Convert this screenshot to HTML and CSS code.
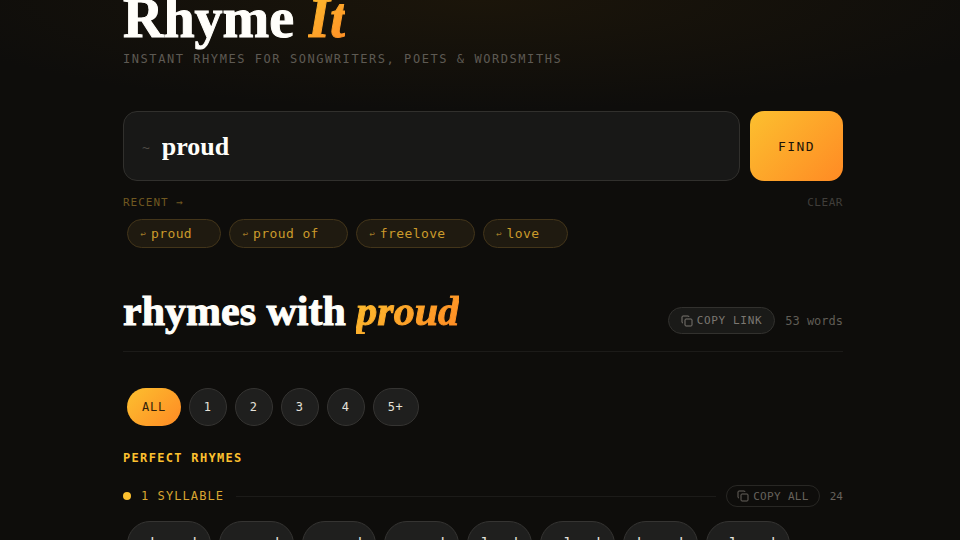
FILE: index.html
```html
<!DOCTYPE html>
<html lang="en">
<head>
<meta charset="utf-8">
<title>Rhyme It</title>
<link rel="stylesheet" href="styles.css">
</head>
<body>
<main class="page">
  <header class="masthead">
    <h1 class="brand">Rhyme <em class="accent">It</em></h1>
    <p class="tagline">Instant rhymes for songwriters, poets &amp; wordsmiths</p>
  </header>

  <form class="search">
    <label class="search-box">
      <span class="search-mark">~</span>
      <input class="search-input" type="text" value="proud" aria-label="Word to rhyme">
    </label>
    <button class="find" type="button">Find</button>
  </form>

  <section class="recent">
    <div class="recent-head">
      <span class="recent-title">Recent →</span>
      <button class="clear" type="button">Clear</button>
    </div>
    <div class="chips">
      <button class="recent-chip" type="button"><span class="back">↩</span>proud</button>
      <button class="recent-chip" type="button"><span class="back">↩</span>proud of</button>
      <button class="recent-chip" type="button"><span class="back">↩</span>freelove</button>
      <button class="recent-chip" type="button"><span class="back">↩</span>love</button>
    </div>
  </section>

  <section class="results">
    <div class="results-head">
      <h2 class="results-title">rhymes with <em class="accent">proud</em></h2>
      <div class="results-meta">
        <button class="copy copy-link" type="button">
          <svg class="copy-icon" viewBox="0 0 24 24"><rect x="8" y="8" width="14" height="14" rx="2"/><path d="M4 16a2 2 0 0 1-2-2V4a2 2 0 0 1 2-2h10a2 2 0 0 1 2 2"/></svg>
          Copy link
        </button>
        <span class="total">53 words</span>
      </div>
    </div>

    <div class="chips filters">
      <button class="filter active" type="button">ALL</button>
      <button class="filter" type="button">1</button>
      <button class="filter" type="button">2</button>
      <button class="filter" type="button">3</button>
      <button class="filter" type="button">4</button>
      <button class="filter" type="button">5+</button>
    </div>

    <h3 class="kind">Perfect rhymes</h3>
    <div class="group-head">
      <span class="dot"></span>
      <h4 class="group-title">1 syllable</h4>
      <span class="rule"></span>
      <button class="copy copy-all" type="button">
        <svg class="copy-icon" viewBox="0 0 24 24"><rect x="8" y="8" width="14" height="14" rx="2"/><path d="M4 16a2 2 0 0 1-2-2V4a2 2 0 0 1 2-2h10a2 2 0 0 1 2 2"/></svg>
        Copy all
      </button>
      <span class="count">24</span>
    </div>
    <div class="chips words">
      <button class="word" type="button">shroud</button>
      <button class="word" type="button">crowd</button>
      <button class="word" type="button">vowed</button>
      <button class="word" type="button">wowed</button>
      <button class="word" type="button">loud</button>
      <button class="word" type="button">cloud</button>
      <button class="word" type="button">bowed</button>
      <button class="word" type="button">plowed</button>
    </div>
  </section>
</main>
</body>
</html>
```
FILE: styles.css
```css
:root {
  --amber: #fcc02f;
  --orange: #ff8a24;
  --glow: linear-gradient(135deg, var(--amber), var(--orange));
  --serif: "Liberation Serif", serif;
  --mono: "DejaVu Sans Mono", monospace;
}

* { box-sizing: border-box; margin: 0; }

html { background: #0e0d0b; }

body {
  height: 100vh;
  overflow: hidden;
  padding-left: 6px;
  background: radial-gradient(ellipse 60% 110px at 50% 0, #1b150a, transparent);
  color: #fffefa;
  font-family: var(--mono);
}

button {
  border: 0;
  padding: 0;
  background: none;
  color: inherit;
  font-family: inherit;
}

.page {
  max-width: 720px;
  margin: -10px auto 0;
}

.accent {
  background: var(--glow);
  background-clip: text;
  -webkit-background-clip: text;
  color: transparent;
}

.brand {
  font: bold 56px/56px var(--serif);
  -webkit-text-stroke: 1px;
}

.tagline {
  margin-top: 5px;
  color: #5e5a53;
  font-size: 12px;
  line-height: 16px;
  letter-spacing: 0.13em;
  text-transform: uppercase;
}

.search {
  display: flex;
  gap: 10px;
  margin-top: 44px;
}

.search-box {
  display: flex;
  align-items: center;
  flex: 1;
  gap: 12px;
  height: 70px;
  padding: 2px 18px 0;
  border: 1px solid #31302d;
  border-radius: 14px;
  background: #181817;
}

.search-mark { color: #4e4b46; font-size: 13px; }

.search-input {
  flex: 1;
  min-width: 0;
  border: 0;
  padding: 0;
  outline: 0;
  background: none;
  color: #fffefa;
  font: bold 26px/32px var(--serif);
}

.find {
  padding: 0 28px;
  border-radius: 14px;
  background: var(--glow);
  color: #1c1408;
  font-size: 13px;
  letter-spacing: 0.11em;
  text-transform: uppercase;
}

.recent { margin-top: 13px; }

.recent-head {
  display: flex;
  justify-content: space-between;
  align-items: center;
  height: 16px;
  font-size: 11px;
  text-transform: uppercase;
}

.recent-title { color: #705820; letter-spacing: 1px; }

.clear { color: #403e3a; font-size: 11px; letter-spacing: 0.05em; text-transform: uppercase; }

.chips {
  display: flex;
  flex-wrap: wrap;
  gap: 8px;
  margin-left: 4px;
}

.recent .chips { margin-top: 9px; }

.recent-chip {
  display: flex;
  align-items: center;
  gap: 4px;
  height: 29px;
  padding: 0 28px 0 12px;
  border: 1px solid #43351a;
  border-radius: 15px;
  background: #1f1a10;
  color: #cb9a2b;
  font-size: 13px;
  letter-spacing: 0.03em;
}

.back { width: 7px; color: #a27c28; font-size: 9px; }

.results-head {
  display: flex;
  justify-content: space-between;
  align-items: flex-end;
  margin-top: 40px;
  padding-bottom: 17px;
  border-bottom: 1px solid #1c1b19;
}

.results-title {
  font: bold 42px/46px var(--serif);
  -webkit-text-stroke: 1px;
}

.results-meta { display: flex; align-items: center; gap: 10px; }

.total { color: #605d56; font-size: 12px; }

.copy {
  display: flex;
  align-items: center;
  gap: 4px;
  font-size: 11px;
  letter-spacing: 0.06em;
  text-transform: uppercase;
}

.copy-link {
  height: 27px;
  padding: 0 12px;
  border: 1px solid #32312e;
  border-radius: 14px;
  background: #1a1a18;
  color: #7b7771;
}

.copy-all {
  height: 22px;
  padding: 0 10px;
  border: 1px solid #282724;
  border-radius: 11px;
  color: #66625c;
  letter-spacing: 0.03em;
}

.copy-icon {
  width: 12px;
  height: 12px;
  fill: none;
  stroke: currentColor;
  stroke-width: 2;
}

.filters { margin-top: 36px; }

.filter {
  height: 38px;
  padding: 0 14px;
  border: 1px solid #353432;
  border-radius: 19px;
  background: #1f1f1e;
  color: #e4e1da;
  font-size: 12px;
  letter-spacing: 0.06em;
}

.filter.active {
  border-color: transparent;
  background: var(--glow) border-box;
  color: #33210a;
}

.kind {
  margin-top: 24px;
  color: var(--amber);
  font-size: 12px;
  line-height: 16px;
  letter-spacing: 0.11em;
  text-transform: uppercase;
}

.group-head {
  display: flex;
  align-items: center;
  gap: 10px;
  margin-top: 19px;
}

.dot {
  width: 8px;
  height: 8px;
  border-radius: 50%;
  background: var(--amber);
}

.group-title {
  margin-right: 2px;
  color: #d9a631;
  font-size: 12px;
  font-weight: 400;
  letter-spacing: 0.09em;
  text-transform: uppercase;
}

.rule { flex: 1; height: 1px; background: #1c1b19; }

.count { color: #66625c; font-size: 11px; }

.words { margin-top: 14px; }

.word {
  height: 46px;
  padding: 0 13px;
  border: 1px solid #353432;
  border-radius: 23px;
  background: #1f1f1e;
  color: #e4e1da;
  font-size: 15px;
  letter-spacing: 0.02em;
}
```
